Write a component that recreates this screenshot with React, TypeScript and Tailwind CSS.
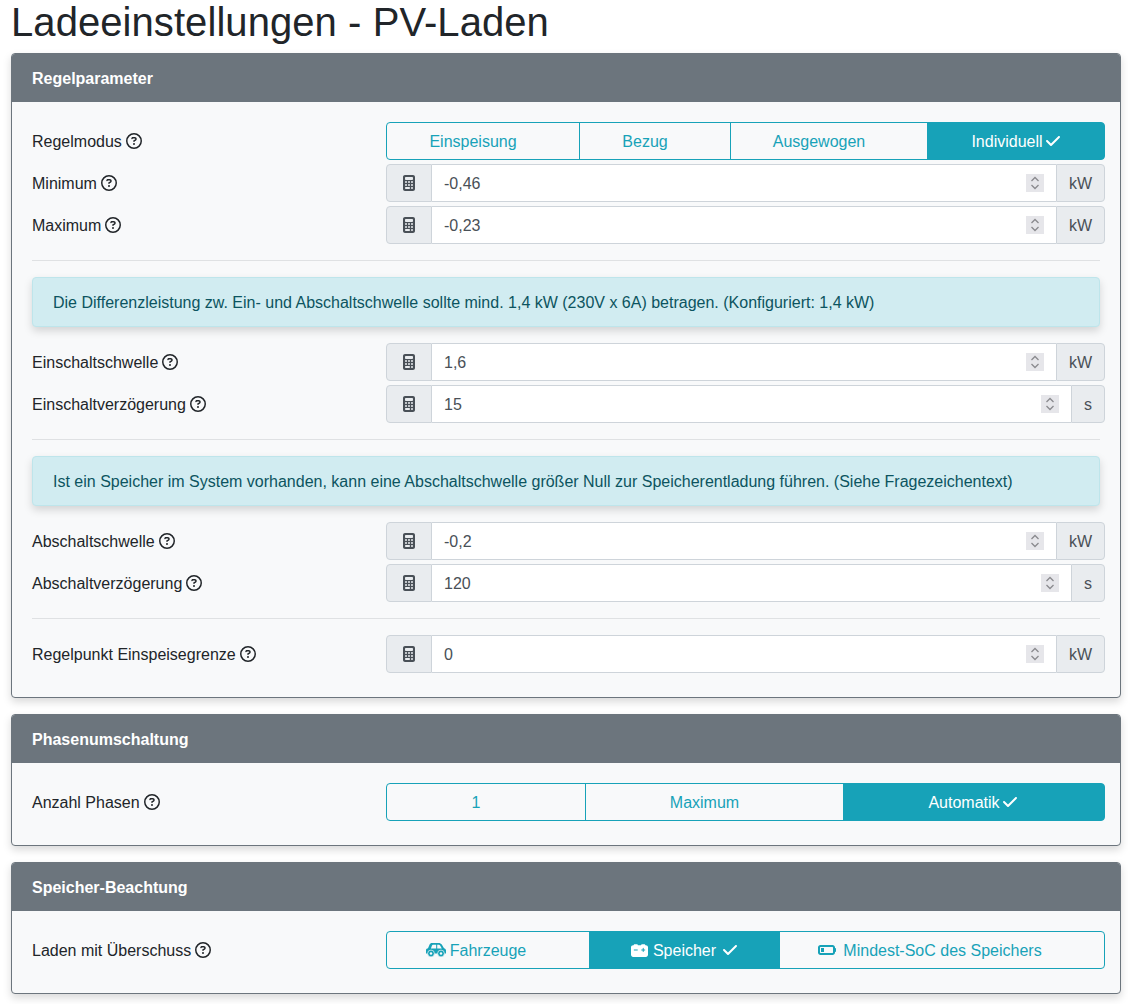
import { FaCalculator, FaCarBattery, FaCheck, FaBatteryQuarter, FaRegCircleQuestion } from "react-icons/fa6";
import type { ReactNode } from "react";

function Help() {
  return <FaRegCircleQuestion className="ml-[4px] inline-block align-[-2px] text-[16px] text-[#212529]" />;
}

function Spinner() {
  return (
    <svg width="18" height="18" viewBox="0 0 18 18" className="shrink-0 bg-[#e6e6ea]">
      <path d="M5.5 7 9 3.5 12.5 7" fill="none" stroke="#8a8a8e" strokeWidth="1.3" />
      <path d="M5.5 11 9 14.5 12.5 11" fill="none" stroke="#8a8a8e" strokeWidth="1.3" />
    </svg>
  );
}

function CarIcon() {
  return (
    <svg width="20" height="14" viewBox="0 0 20 14" className="mr-[4px] shrink-0 text-[#17a2b8]">
      <path fill="currentColor" d="M0 10.5V7C0 6 1 5.5 2 5.3L3.6 1.5C4 .5 5 0 6 0h6.5C14 0 15 .6 15.8 1.5L18 5.3C19 5.6 20 6.4 20 7.5v3Z" />
      <path fill="#f8f9fa" d="M4.9 5.6 6 2.4C6.2 1.9 6.6 1.7 7 1.7h3.2v3.9ZM11.2 1.7h1.6c.6 0 1 .3 1.3.7l1.7 3.2h-4.6Z" />
      <circle cx="5" cy="10.5" r="3.4" fill="currentColor" stroke="#f8f9fa" strokeWidth=".7" />
      <circle cx="15" cy="10.5" r="3.4" fill="currentColor" stroke="#f8f9fa" strokeWidth=".7" />
      <circle cx="5" cy="10.5" r="1.2" fill="#f8f9fa" />
      <circle cx="15" cy="10.5" r="1.2" fill="#f8f9fa" />
    </svg>
  );
}

function Row({ label, value, unit }: { label: string; value?: string; unit?: string }) {
  return (
    <div className="flex h-[38px] items-center">
      <div className="w-[354px] shrink-0 pt-[2px] text-[#212529]">{label}<Help /></div>
      <div className="flex h-[38px] w-[719px] shrink-0">
        <div className="flex w-[46px] shrink-0 items-center justify-center rounded-l-[4px] border border-[#ced4da] bg-[#e9ecef] text-[#495057]">
          <FaCalculator className="text-[16px]" />
        </div>
        <div className="flex min-w-0 flex-1 items-center border-y border-[#ced4da] bg-white px-[12px] text-[#495057]">
          <span className="flex-1 pt-[2px]">{value}</span>
          <Spinner />
        </div>
        <div className="flex shrink-0 items-center justify-center rounded-r-[4px] border border-[#ced4da] bg-[#e9ecef] px-[12px] pt-[2px] text-[#495057]">
          {unit}
        </div>
      </div>
    </div>
  );
}

function Group({ label, gap, items }: { label: string; gap: string; items: { text: string; icon?: ReactNode; on?: boolean; w: string }[] }) {
  return (
    <div className="flex h-[38px] items-center">
      <div className="w-[354px] shrink-0 pt-[2px] text-[#212529]">{label}<Help /></div>
      <div className="flex h-[38px] w-[719px] shrink-0">
        {items.map((it, i) => (
          <div
            key={it.text}
            className={`${it.w} flex items-center justify-center border border-[#17a2b8] ${i > 0 ? "-ml-px" : ""} ${i === 0 ? "rounded-l-[4px]" : ""} ${i === items.length - 1 ? "rounded-r-[4px]" : ""} ${it.on ? "bg-[#17a2b8] text-white" : "pr-[2px] text-[#17a2b8]"}`}
          >
            {it.icon}
            <span className="pt-[2px]">{it.text}</span>
            <FaCheck className={`${gap} text-[16px] ${it.on ? "" : "invisible"}`} />
          </div>
        ))}
      </div>
    </div>
  );
}

function Alert({ children }: { children: ReactNode }) {
  return (
    <div className="h-[50px] rounded-[4px] border border-[#bee5eb] bg-[#d1ecf1] px-[20px] pt-[13px] pb-[11px] leading-[24px] text-[#0c5460] shadow-[0_4px_8px_rgba(0,0,0,0.15)]">
      {children}
    </div>
  );
}

function Card({ title, children }: { title: string; children: ReactNode }) {
  return (
    <section className="ml-[11px] w-[1110px] overflow-hidden rounded-[4px] border border-[#6c757d] bg-[#f8f9fa] shadow-[0_4px_8px_rgba(0,0,0,0.15)]">
      <div className="flex h-[48px] items-center bg-[#6c757d] px-[20px] pt-[2px] font-bold text-white">{title}</div>
      <div className="p-[20px]">{children}</div>
    </section>
  );
}

function Hr() {
  return <hr className="my-[16px] w-[1068px] border-t border-[#dfe1e3]" />;
}

export default function App() {
  return (
    <div className="h-[1004px] overflow-hidden bg-white font-['Liberation_Sans',Arial,sans-serif] text-[16px] leading-[24px]">
      <div className="h-0 shadow-[0_0_4px_rgba(0,0,0,0.25)]" />
      <h1 className="ml-[11px] pb-[9px] text-[40px] leading-[44px] tracking-[0.07px] text-[#212529]">Ladeeinstellungen - PV-Laden</h1>
      <div className="flex flex-col gap-[16px]">
        <Card title="Regelparameter">
          <div className="flex flex-col gap-[4px]">
            <Group
              label="Regelmodus"
              gap="ml-[2px]"
              items={[
                { text: "Einspeisung", w: "w-[194px]" },
                { text: "Bezug", w: "w-[152px]" },
                { text: "Ausgewogen", w: "w-[198px]" },
                { text: "Individuell", on: true, w: "w-[178px]" },
              ]}
            />
            <Row label="Minimum" value="-0,46" unit="kW" />
            <Row label="Maximum" value="-0,23" unit="kW" />
          </div>
          <Hr />
          <Alert>Die Differenzleistung zw. Ein- und Abschaltschwelle sollte mind. 1,4 kW (230V x 6A) betragen. (Konfiguriert: 1,4 kW)</Alert>
          <div className="mt-[16px] flex flex-col gap-[4px]">
            <Row label="Einschaltschwelle" value="1,6" unit="kW" />
            <Row label="Einschaltverzögerung" value="15" unit="s" />
          </div>
          <Hr />
          <Alert>Ist ein Speicher im System vorhanden, kann eine Abschaltschwelle größer Null zur Speicherentladung führen. (Siehe Fragezeichentext)</Alert>
          <div className="mt-[16px] flex flex-col gap-[4px]">
            <Row label="Abschaltschwelle" value="-0,2" unit="kW" />
            <Row label="Abschaltverzögerung" value="120" unit="s" />
          </div>
          <Hr />
          <Row label="Regelpunkt Einspeisegrenze" value="0" unit="kW" />
          <div className="h-[4px]" />
        </Card>
        <Card title="Phasenumschaltung">
          <Group
            label="Anzahl Phasen"
            gap="ml-[2px]"
            items={[
              { text: "1", w: "w-[200px]" },
              { text: "Maximum", w: "w-[259px]" },
              { text: "Automatik", on: true, w: "w-[262px] pr-[2px]" },
            ]}
          />
          <div className="h-[4px]" />
        </Card>
        <Card title="Speicher-Beachtung">
          <Group
            label="Laden mit Überschuss"
            gap="ml-[6px]"
            items={[
              { text: "Fahrzeuge", icon: <CarIcon />, w: "w-[204px]" },
              { text: "Speicher", icon: <FaCarBattery className="mr-[5px] text-[17px]" />, on: true, w: "w-[191px]" },
              { text: "Mindest-SoC des Speichers", icon: <FaBatteryQuarter className="mr-[7px] text-[18px]" />, w: "w-[326px]" },
            ]}
          />
          <div className="h-[4px]" />
        </Card>
      </div>
    </div>
  );
}
